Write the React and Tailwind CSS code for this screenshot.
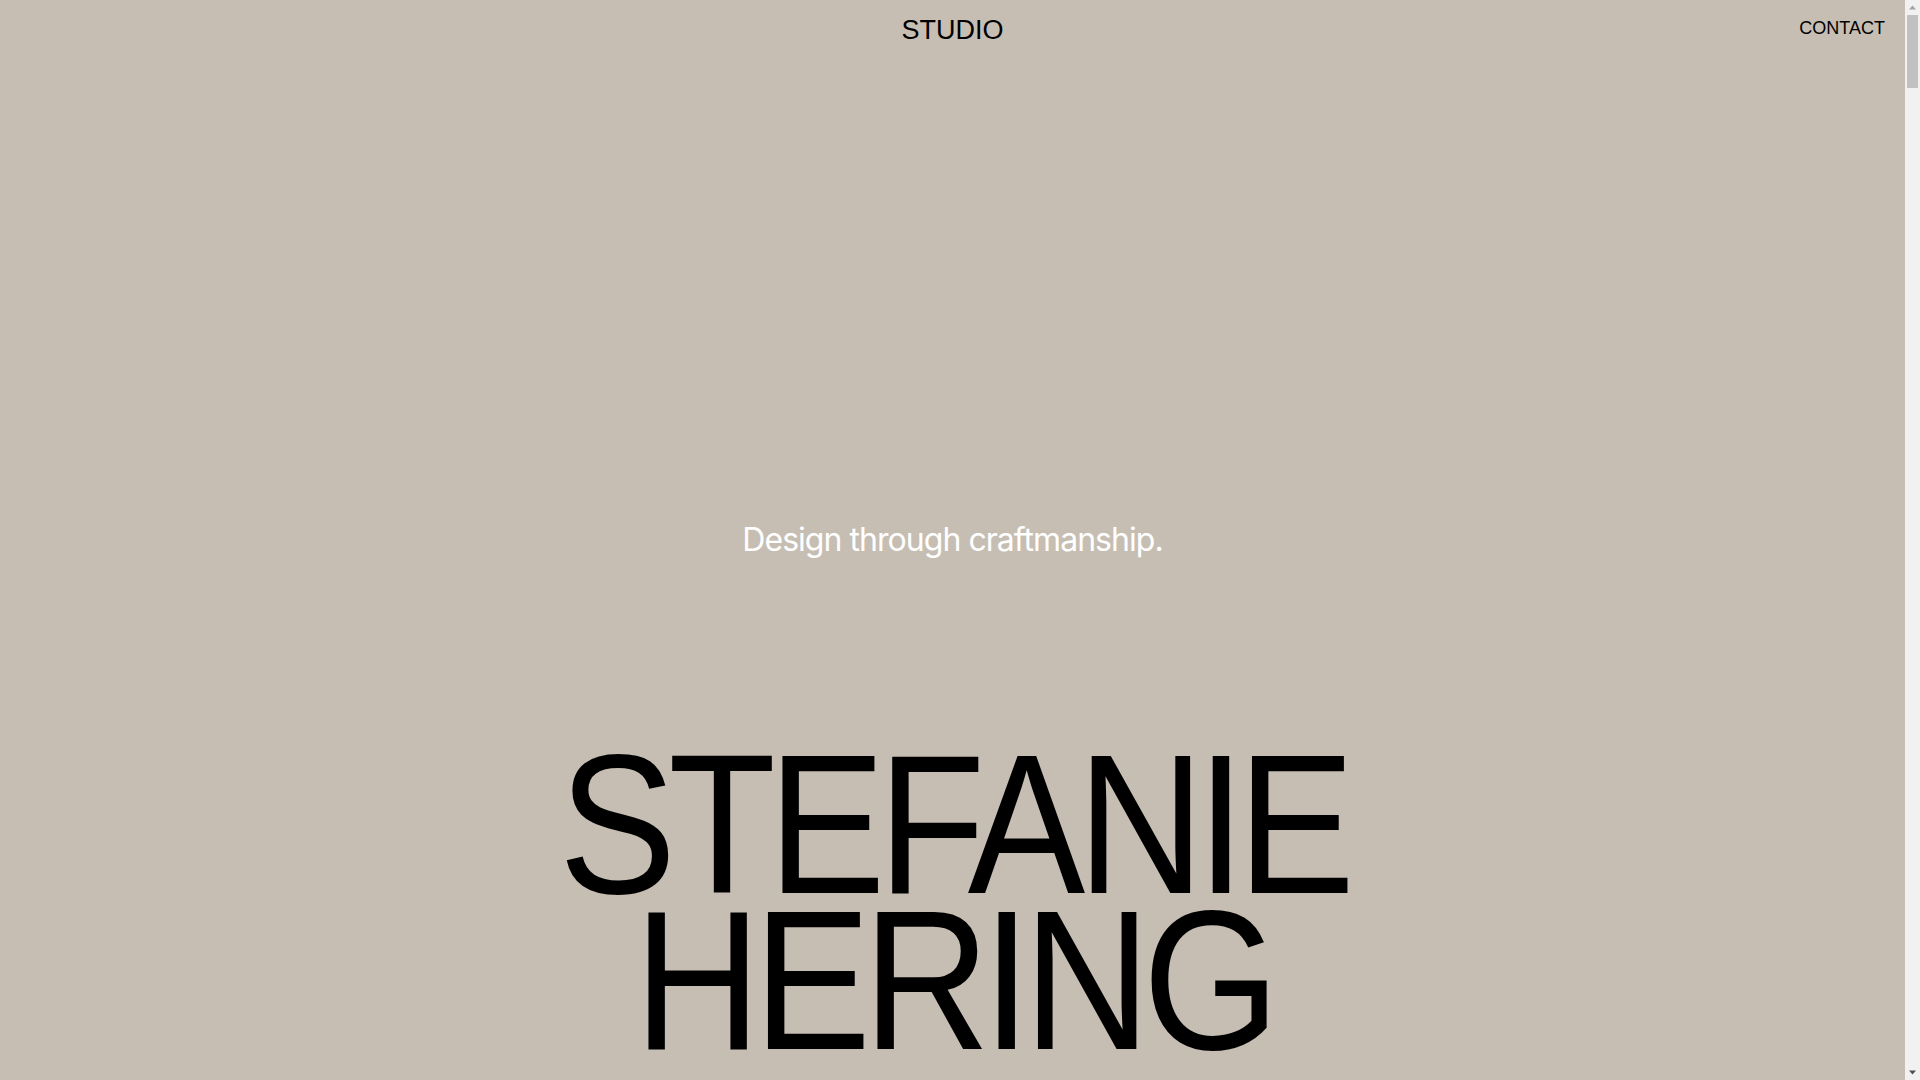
const grotesk = { fontFamily: '"Liberation Sans", Arial, sans-serif' };

function Scrollbar() {
  return (
    <div className="flex w-[15px] shrink-0 flex-col items-center bg-[#f1f1f1]">
      <svg width="15" height="15" viewBox="0 0 15 15" className="shrink-0">
        <path d="M4 9.5 L7.5 5.5 L11 9.5 Z" fill="#a3a3a3" />
      </svg>
      <div className="h-[73px] w-[11px] bg-[#c1c1c1]" />
      <div className="flex-1" />
      <svg width="15" height="15" viewBox="0 0 15 15" className="shrink-0">
        <path d="M4 5.5 L11 5.5 L7.5 9.5 Z" fill="#505050" />
      </svg>
    </div>
  );
}

export default function App() {
  return (
    <div className="flex h-screen overflow-hidden bg-[#c6beb3] text-black" style={{ fontFamily: 'Inter, "Noto Sans", sans-serif' }}>
      <main className="flex-1 overflow-y-auto">
        {/* Hero */}
        <section className="flex flex-col">
          <header className="grid grid-cols-3 items-start px-5 pt-[14px]" style={grotesk}>
            <div />
            <a href="#" className="justify-self-center text-[27px] leading-[32px]">STUDIO</a>
            <a href="#" className="justify-self-end text-[18px] leading-[28px]">CONTACT</a>
          </header>

          <p className="mt-[474px] text-center text-[32px] leading-[40px] tracking-[-0.03em] text-white">
            Design through craftmanship.
          </p>

          <div className="mt-[187px] flex justify-center">
            <h1
              className="scale-x-[0.89] text-center text-[198px] leading-[156px] tracking-[-0.045em] font-normal"
              style={grotesk}
            >
              STEFANIE
              <br />
              HERING
            </h1>
          </div>
        </section>

        {/* Rest of the page below the fold */}
        <section className="h-[14200px]" />
      </main>
      <Scrollbar />
    </div>
  );
}
